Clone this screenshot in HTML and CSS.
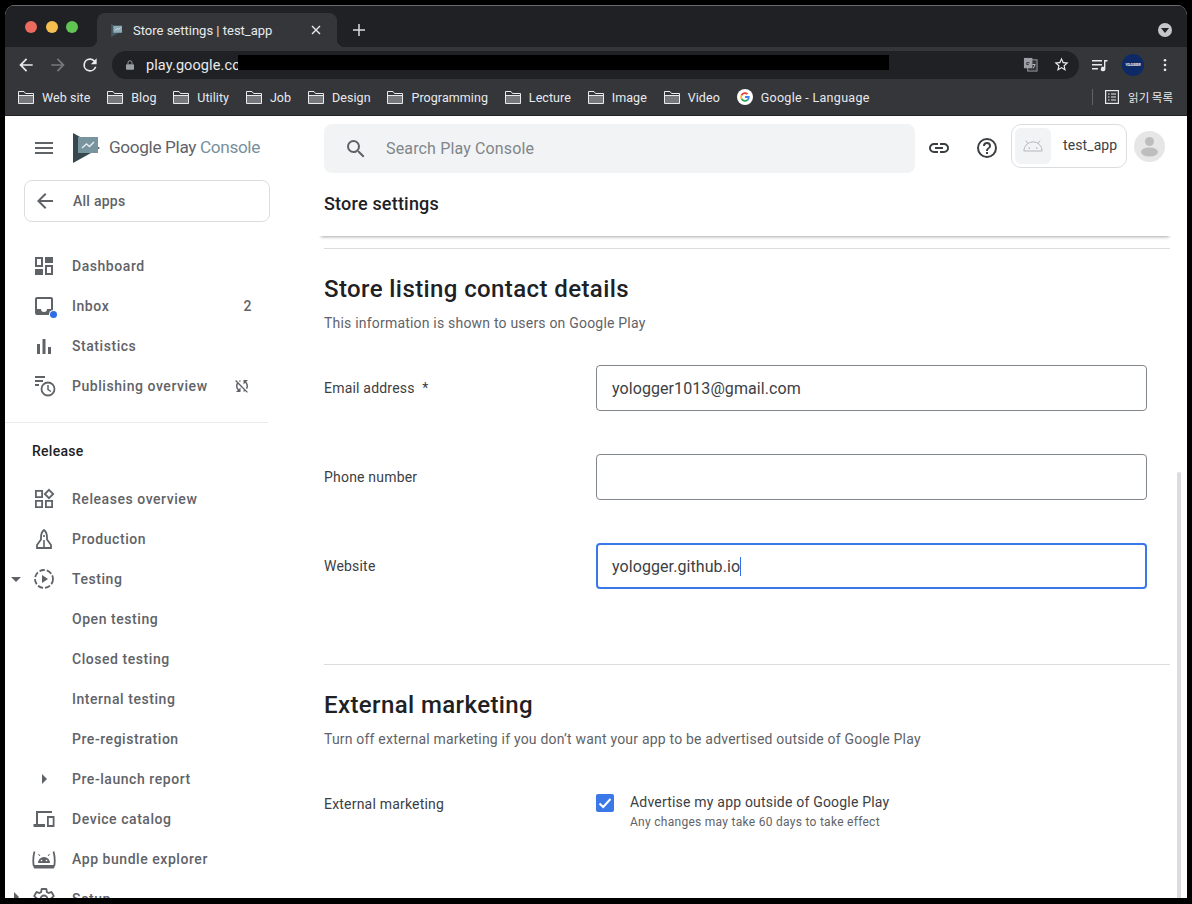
FILE: index.html
```html
<!DOCTYPE html>
<html lang="en">

<head>
    <meta charset="UTF-8">
    <title>Store settings | test_app</title>
    <link rel="stylesheet" href="styles.css">
</head>

<body>
    <svg class="defs" width="0" height="0">
        <symbol id="folder" viewBox="0 0 16 13">
            <path d="M.5 4.500h15v8H.5z" fill="#77787b"/>
            <path d="M.5.500h5.500l1.500 2H15.500v10H.5zM.5 4.500h15" fill="none" stroke="#e8eaed"/>
        </symbol>
    </svg>

    <div class="window">

        <!-- tab strip -->
        <div class="titlebar">
            <div class="lights">
                <span class="light red"></span>
                <span class="light yellow"></span>
                <span class="light green"></span>
            </div>
            <div class="tab">
                <svg class="favicon" viewBox="0 0 27 30"><path d="M0 0l27 15L0 30z" fill="#455a64"/><path d="M5 4h20v16H5z" fill="#8eabb8"/><path d="M9 15l5-5 3 3 5-5" fill="none" stroke="#dfe7ea" stroke-width="2"/></svg>
                <span class="tab-title">Store settings | test_app</span>
                <svg class="tab-close" viewBox="0 0 10 10"><path d="M1 1l8 8M9 1l-8 8" stroke="#e8eaed" stroke-width="1.4"/></svg>
            </div>
            <svg class="tab-plus" viewBox="0 0 12 12"><path d="M6 0v12M0 6h12" stroke="#dadce0" stroke-width="1.5"/></svg>
            <div class="tab-search"><span class="tab-search-arrow"></span></div>
        </div>

        <!-- address bar -->
        <div class="toolbar">
            <svg class="tb-icon" viewBox="0 0 24 24"><path d="M20 11H7.830l5.590-5.590L12 4l-8 8 8 8 1.410-1.410L7.830 13H20v-2z" fill="#e8eaed"/></svg>
            <svg class="tb-icon" viewBox="0 0 24 24"><path d="M4 11h12.170l-5.590-5.590L12 4l8 8-8 8-1.410-1.410L16.170 13H4v-2z" fill="#77787b"/></svg>
            <svg class="tb-icon" viewBox="0 0 24 24"><path d="M17.650 6.350A7.960 7.960 0 0 0 12 4a8 8 0 1 0 7.730 10h-2.080A6 6 0 1 1 12 6c1.660 0 3.140.690 4.220 1.780L13 11h7V4l-2.350 2.350z" fill="#e8eaed"/></svg>
            <div class="omnibox">
                <svg class="lock" viewBox="0 0 10 12"><path d="M1 5h8a1 1 0 0 1 1 1v5a1 1 0 0 1-1 1H1a1 1 0 0 1-1-1V6a1 1 0 0 1 1-1z" fill="#9aa0a6"/><path d="M2.500 5V3.200a2.500 2.500 0 0 1 5 0V5" fill="none" stroke="#9aa0a6" stroke-width="1.200"/></svg>
                <span class="url">play.google.com</span>
                <svg class="omni-translate" viewBox="0 0 16 16"><rect x="5" y="3" width="10" height="12" fill="#35363a" stroke="#9aa0a6"/><rect x="1" y="1" width="9" height="11" fill="#9aa0a6"/><path d="M7 6H4v2h2" fill="none" stroke="#35363a"/><path d="M10 8h3M11 12l2-4" stroke="#bdc1c6" fill="none"/></svg>
                <svg class="omni-star" viewBox="0 0 24 24"><path d="M22 9.240l-7.190-.620L12 2 9.190 8.630 2 9.240l5.460 4.730L5.820 21 12 17.270 18.180 21l-1.630-7.030L22 9.240zM12 15.400l-3.760 2.270 1-4.280-3.320-2.880 4.380-.380L12 6.100l1.710 4.040 4.380.380-3.320 2.880 1 4.280L12 15.400z" fill="#e8eaed"/></svg>
            </div>
            <svg class="tb-media" viewBox="0 0 16 14"><path d="M0 2h10v1.400H0zM0 6h10v1.400H0zM0 10h6v1.400H0z" fill="#e8eaed"/><path d="M12 2h3.500v1.600H13.400V11a2.300 2.300 0 1 1-1.400-2.100z" fill="#e8eaed"/></svg>
            <div class="tb-avatar"><span>YOLOGGER</span></div>
            <svg class="tb-dots" viewBox="0 0 4 16"><circle cx="2" cy="2.500" r="1.500" fill="#e8eaed"/><circle cx="2" cy="8" r="1.500" fill="#e8eaed"/><circle cx="2" cy="13.500" r="1.500" fill="#e8eaed"/></svg>
        </div>

        <!-- bookmarks -->
        <div class="bookmarks">
            <a class="bm"><svg class="folder"><use href="#folder"/></svg>Web site</a>
            <a class="bm"><svg class="folder"><use href="#folder"/></svg>Blog</a>
            <a class="bm"><svg class="folder"><use href="#folder"/></svg>Utility</a>
            <a class="bm"><svg class="folder"><use href="#folder"/></svg>Job</a>
            <a class="bm"><svg class="folder"><use href="#folder"/></svg>Design</a>
            <a class="bm"><svg class="folder"><use href="#folder"/></svg>Programming</a>
            <a class="bm"><svg class="folder"><use href="#folder"/></svg>Lecture</a>
            <a class="bm"><svg class="folder"><use href="#folder"/></svg>Image</a>
            <a class="bm"><svg class="folder"><use href="#folder"/></svg>Video</a>
            <a class="bm bm-google">
                <svg class="g-logo" viewBox="0 0 16 16">
                    <circle cx="8" cy="8" r="8" fill="#fff"/>
                    <path d="M8 8h3.800a3.900 3.900 0 0 1-1.300 3" fill="none" stroke="#4285f4" stroke-width="1.800"/>
                    <path d="M10.500 11a3.900 3.900 0 0 1-6-1.300" fill="none" stroke="#34a853" stroke-width="1.800"/>
                    <path d="M4.500 9.700a3.900 3.900 0 0 1 0-3.400" fill="none" stroke="#fbbc05" stroke-width="1.800"/>
                    <path d="M4.500 6.300a3.900 3.900 0 0 1 6-1.300" fill="none" stroke="#ea4335" stroke-width="1.800"/>
                </svg>Google - Language</a>
            <div class="reading">
                <svg class="reading-icon" viewBox="0 0 14 14"><rect x=".6" y=".6" width="12.800" height="12.800" fill="none" stroke="#e8eaed" stroke-width="1.200"/><path d="M3 4h1.500M3 7h1.500M3 10h1.500M6 4h5M6 7h5M6 10h5" stroke="#e8eaed"/></svg>
                <span class="reading-text">읽기 목록</span>
            </div>
        </div>

        <div class="page">
            <!-- left nav -->
            <div class="sidebar">
                <div class="brand">
                    <svg class="hamburger" viewBox="0 0 18 12"><path d="M0 0h18v2H0zM0 5h18v2H0zM0 10h18v2H0z" fill="#5f6368"/></svg>
                    <svg class="play-logo" viewBox="0 0 27 30"><path d="M0 0l27 15L0 30z" fill="#37474f"/><path d="M5 4h20v16H5z" fill="#78949f"/><path d="M9 15l4.500-4 3 2.500 4.500-4.500" fill="none" stroke="#e3eaed" stroke-width="1.500"/></svg>
                    <span class="brand-name">Google Play <span class="brand-light">Console</span></span>
                </div>
                <div class="all-apps">
                    <svg class="i24" viewBox="0 0 24 24"><path d="M20 11H7.830l5.590-5.590L12 4l-8 8 8 8 1.410-1.410L7.830 13H20v-2z" fill="#5f6368"/></svg>
                    <span>All apps</span>
                </div>

                <div class="nav">
                    <div class="item">
                        <svg class="i24" viewBox="0 0 24 24"><path d="M3 3h8v10H3zm2 2v6h4V5zM13 3h8v6h-8zM3 15h8v6H3zM13 11h8v10h-8zm2 2v6h4v-6z" fill="#5f6368" fill-rule="evenodd"/></svg>
                        <span>Dashboard</span>
                    </div>
                    <div class="item">
                        <span class="dot-wrap">
                            <svg class="i24" viewBox="0 0 24 24"><path d="M5 3h14a2 2 0 0 1 2 2v14a2 2 0 0 1-2 2H5a2 2 0 0 1-2-2V5a2 2 0 0 1 2-2zm0 2v10h4a3 3 0 0 0 6 0h4V5z" fill="#5f6368" fill-rule="evenodd"/></svg>
                            <span class="blue-dot"></span>
                        </span>
                        <span>Inbox</span>
                        <span class="count">2</span>
                    </div>
                    <div class="item">
                        <svg class="i24" viewBox="0 0 24 24"><path d="M5 10h3v10H5zM10.500 5h3v15h-3zM16 13h3v7h-3z" fill="#5f6368"/></svg>
                        <span>Statistics</span>
                    </div>
                    <div class="item">
                        <svg class="i24" viewBox="0 0 24 24"><path d="M3 2h10v2H3zM3 6h8v2H3zM3 10h4v2H3z" fill="#5f6368"/><circle cx="16" cy="15" r="6.500" fill="none" stroke="#5f6368" stroke-width="1.800"/><path d="M16 11v4.500l3 2" fill="none" stroke="#5f6368" stroke-width="1.500"/></svg>
                        <span>Publishing overview</span>
                        <svg class="sync-off" viewBox="0 0 24 24"><path d="M10 6.350V4.260c-.8.210-1.550.540-2.230.960l1.460 1.460c.250-.120.500-.240.770-.330zm-7.140-.940l2.360 2.360C4.450 8.990 4 10.440 4 12c0 2.210.910 4.200 2.360 5.640L4 20h6v-6l-2.240 2.240C6.680 15.150 6 13.660 6 12c0-1 .250-1.940.680-2.770l8.080 8.080c-.250.130-.500.250-.770.340v2.090c.8-.210 1.550-.540 2.230-.960l2.360 2.360 1.270-1.270L4.140 4.140 2.860 5.410zM20 4h-6v6l2.240-2.240C17.320 8.850 18 10.340 18 12c0 1-.250 1.940-.680 2.770l1.460 1.460C19.550 15.010 20 13.560 20 12c0-2.210-.910-4.200-2.360-5.640L20 4z" fill="#5f6368"/></svg>
                    </div>
                </div>

                <div class="side-line"></div>
                <div class="side-title">Release</div>

                <div class="nav">
                    <div class="item">
                        <svg class="i24" viewBox="0 0 24 24"><path d="M3.900 3.900h6.200v6.200H3.900zM3.900 13.900h6.200v6.200H3.900zM13.900 13.900h6.200v6.200h-6.200zM17 2.800L21.200 7 17 11.200 12.800 7z" fill="none" stroke="#5f6368" stroke-width="1.800"/></svg>
                        <span>Releases overview</span>
                    </div>
                    <div class="item">
                        <svg class="i24" viewBox="0 0 24 24"><path d="M12 3c2 1.500 3 4 3 7.500v2l4 5.500v3H5v-3l4-5.500v-2C9 7 10 4.500 12 3z" fill="none" stroke="#5f6368" stroke-width="1.800"/><path d="M12 8v2M12 13v8" stroke="#5f6368" stroke-width="1.600"/></svg>
                        <span>Production</span>
                    </div>
                    <div class="item">
                        <span class="caret-down"></span>
                        <svg class="i24" viewBox="0 0 24 24"><circle cx="12" cy="12" r="9" fill="none" stroke="#5f6368" stroke-width="1.800" stroke-dasharray="5.500 2"/><path d="M10 8l6 4-6 4z" fill="#5f6368"/></svg>
                        <span>Testing</span>
                    </div>
                    <div class="item"><span class="no-icon"></span><span>Open testing</span></div>
                    <div class="item"><span class="no-icon"></span><span>Closed testing</span></div>
                    <div class="item"><span class="no-icon"></span><span>Internal testing</span></div>
                    <div class="item"><span class="no-icon"></span><span>Pre-registration</span></div>
                    <div class="item">
                        <span class="no-icon"><span class="caret-right"></span></span>
                        <span>Pre-launch report</span>
                    </div>
                    <div class="item">
                        <svg class="i24" viewBox="0 0 24 24"><path d="M4 4h16v2H6v11h7v3H1.500v-3H4z" fill="#5f6368"/><path d="M15 9h7.500v11H15zm1.800 2v7h3.900v-7z" fill="#5f6368" fill-rule="evenodd"/></svg>
                        <span>Device catalog</span>
                    </div>
                    <div class="item">
                        <svg class="i24" viewBox="0 0 24 24"><path d="M2.500 4.500c-1.300 4.500-1.400 10.500-.8 14.500M21.500 4.500c1.300 4.500 1.400 10.500.8 14.500" fill="none" stroke="#5f6368" stroke-width="1.800"/><path d="M1.500 18h21v2a1.500 1.500 0 0 1-1.500 1.500H3A1.500 1.500 0 0 1 1.500 20z" fill="#5f6368"/><path d="M6 16a6 6 0 0 1 12 0z" fill="#5f6368"/><path d="M8 9L6.500 7M16 9l1.500-2" stroke="#5f6368"/><circle cx="9.500" cy="13.500" r=".8" fill="#fff"/><circle cx="14.500" cy="13.500" r=".8" fill="#fff"/></svg>
                        <span>App bundle explorer</span>
                    </div>
                    <div class="item">
                        <span class="caret-setup"></span>
                        <svg class="i24" viewBox="0 0 24 24"><path d="M19.430 12.980c.04-.32.070-.64.070-.98s-.03-.66-.07-.98l2.110-1.650c.19-.15.240-.42.120-.64l-2-3.460c-.12-.22-.39-.3-.61-.22l-2.490 1c-.52-.4-1.080-.73-1.690-.98l-.38-2.650A.49.490 0 0 0 14 2h-4c-.25 0-.46.18-.49.420l-.38 2.650c-.61.25-1.170.59-1.690.98l-2.490-1c-.23-.09-.49 0-.61.220l-2 3.460c-.13.220-.07.49.12.640l2.110 1.650c-.04.320-.07.650-.07.980s.03.660.07.980l-2.110 1.650c-.19.150-.24.420-.12.640l2 3.460c.12.220.39.3.61.220l2.490-1c.52.4 1.080.73 1.690.98l.38 2.650c.03.240.24.420.49.420h4c.25 0 .46-.18.49-.42l.38-2.650c.61-.25 1.170-.59 1.690-.98l2.490 1c.23.090.49 0 .61-.22l2-3.460c.12-.22.07-.49-.12-.64zM12 15.500a3.500 3.500 0 1 1 0-7 3.500 3.500 0 0 1 0 7z" fill="none" stroke="#5f6368" stroke-width="1.800"/></svg>
                        <span>Setup</span>
                    </div>
                </div>
            </div>

            <!-- main column -->
            <div class="main">
                <div class="topbar">
                    <div class="search">
                        <svg class="i24" viewBox="0 0 24 24"><path d="M15.500 14h-.79l-.28-.27A6.470 6.470 0 0 0 16 9.500 6.500 6.500 0 1 0 9.500 16c1.610 0 3.090-.59 4.230-1.570l.27.28v.79l5 4.990L20.490 19l-4.990-5zm-6 0a4.500 4.500 0 1 1 0-9 4.500 4.500 0 0 1 0 9z" fill="#5f6368"/></svg>
                        <span>Search Play Console</span>
                    </div>
                    <svg class="top-link" viewBox="0 0 24 24"><path d="M3.900 12c0-1.710 1.390-3.100 3.100-3.100h4V7H7a5 5 0 0 0 0 10h4v-1.900H7c-1.710 0-3.100-1.390-3.100-3.100zM8 13h8v-2H8v2zm9-6h-4v1.900h4c1.710 0 3.100 1.390 3.100 3.100s-1.390 3.100-3.100 3.100h-4V17h4a5 5 0 0 0 0-10z" fill="#3c4043"/></svg>
                    <svg class="top-help" viewBox="0 0 24 24"><path d="M11 18h2v-2h-2v2zm1-16a10 10 0 1 0 0 20 10 10 0 0 0 0-20zm0 18a8 8 0 1 1 0-16 8 8 0 0 1 0 16zm0-14a4 4 0 0 0-4 4h2c0-1.100.9-2 2-2s2 .9 2 2c0 2-3 1.750-3 5h2c0-2.250 3-2.500 3-5a4 4 0 0 0-4-4z" fill="#3c4043"/></svg>
                    <div class="app-chip">
                        <div class="app-icon">
                            <svg class="android" viewBox="0 0 24 14"><path d="M1 13a11 11 0 0 1 22 0z" fill="none" stroke="#b5b8bb" stroke-width="1.200"/><path d="M6 4L3.500 .5M18 4l2.500-3.500" stroke="#b5b8bb" stroke-width="1.200"/><circle cx="7.500" cy="9.500" r="1" fill="#b5b8bb"/><circle cx="16.500" cy="9.500" r="1" fill="#b5b8bb"/></svg>
                        </div>
                        <span class="app-name">test_app</span>
                    </div>
                    <div class="account">
                        <svg viewBox="0 0 31 31"><circle cx="15.500" cy="10.500" r="4.500" fill="#bdbdbd"/><ellipse cx="15.500" cy="21" rx="8.500" ry="4.500" fill="#bdbdbd"/></svg>
                    </div>
                </div>

                <div class="page-head">Store settings</div>
                <div class="rule first"></div>

                <h2 class="section-title">Store listing contact details</h2>
                <p class="section-desc">This information is shown to users on Google Play</p>

                <div class="form">
                    <div class="row">
                        <label class="row-label">Email address <span class="star">*</span></label>
                        <div class="field">yologger1013@gmail.com</div>
                    </div>
                    <div class="row">
                        <label class="row-label">Phone number</label>
                        <div class="field"></div>
                    </div>
                    <div class="row">
                        <label class="row-label">Website</label>
                        <div class="field focused">yologger.github.io<span class="cursor"></span></div>
                    </div>
                </div>

                <div class="rule second"></div>

                <h2 class="section-title">External marketing</h2>
                <p class="section-desc">Turn off external marketing if you don’t want your app to be advertised outside of Google Play</p>

                <div class="check-row">
                    <label class="row-label check-label">External marketing</label>
                    <div class="checkbox">
                        <svg viewBox="0 0 18 18"><path d="M3.500 9.500l3.700 3.500 7.300-8" fill="none" stroke="#fff" stroke-width="2"/></svg>
                    </div>
                    <div class="check-text">
                        <div class="check-main">Advertise my app outside of Google Play</div>
                        <div class="check-sub">Any changes may take 60 days to take effect</div>
                    </div>
                </div>
            </div>

            <div class="scrollbar"></div>
        </div>

        <div class="redacted"></div>
    </div>
</body>

</html>
```

FILE: styles.css
```css
* {
    margin: 0;
    padding: 0;
    box-sizing: border-box;
}

html,
body {
    height: 904px;
    overflow: hidden;
    background: #000;
}

body {
    font-family: Roboto, "Noto Sans CJK KR", sans-serif;
    padding: 5px;
}

.defs {
    display: block;
    height: 0;
}

.window {
    position: relative;
    width: 1182px;
    height: 893px;
    border-radius: 10px 10px 0 0;
    overflow: hidden;
    display: flex;
    flex-direction: column;
    background: #fff;
}

/* tab strip */
.titlebar {
    height: 42px;
    flex: none;
    display: flex;
    align-items: flex-end;
    background: #202124;
    border-top: 1px solid #6b6c6e;
}

.lights {
    width: 92px;
    height: 41px;
    display: flex;
    gap: 8.500px;
    padding: 15px 0 0 20px;
}

.light {
    width: 12px;
    height: 12px;
    border-radius: 50%;
}

.red {
    background: #ed6a5e;
}

.yellow {
    background: #f4bf4f;
}

.green {
    background: #61c554;
}

.tab {
    position: relative;
    width: 240px;
    height: 34px;
    background: #35363a;
    border-radius: 8px 8px 0 0;
    display: flex;
    align-items: center;
    padding: 0 16px 0 14px;
}

.tab::before,
.tab::after {
    content: "";
    position: absolute;
    bottom: 0;
    width: 8px;
    height: 8px;
}

.tab::before {
    left: -8px;
    background: radial-gradient(circle at 0 0, #202124 8px, #35363a 8.5px);
}

.tab::after {
    right: -8px;
    background: radial-gradient(circle at 100% 0, #202124 8px, #35363a 8.5px);
}

.favicon {
    width: 12px;
    height: 13px;
    flex: none;
}

.tab-title {
    margin-left: 10px;
    font-size: 13px;
    color: #e8eaed;
    flex: 1;
}

.tab-close {
    width: 10px;
    height: 10px;
}

.tab-plus {
    width: 12px;
    height: 12px;
    margin: 0 0 11px 16px;
}

.tab-search {
    width: 14px;
    height: 14px;
    margin: 0 15px 10px auto;
    border-radius: 50%;
    background: #c4c7ca;
    display: flex;
    align-items: center;
    justify-content: center;
}

.tab-search-arrow {
    border-left: 4px solid transparent;
    border-right: 4px solid transparent;
    border-top: 5px solid #202124;
    margin-top: 1px;
}

/* address bar */
.toolbar {
    height: 35px;
    flex: none;
    display: flex;
    align-items: center;
    background: #35363a;
    padding-left: 11px;
}

.tb-icon {
    width: 20px;
    height: 20px;
    margin-right: 12px;
}

.omnibox {
    width: 967px;
    height: 28px;
    border-radius: 14px;
    background: #202124;
    display: flex;
    align-items: center;
    padding-left: 14px;
}

.lock {
    width: 8px;
    height: 10px;
}

.url {
    margin: 1px 0 0 12px;
    font-size: 14.500px;
    letter-spacing: .1px;
    color: #e8eaed;
}

.omni-translate {
    width: 15px;
    height: 15px;
    margin-left: auto;
}

.omni-star {
    width: 17px;
    height: 17px;
    margin: 0 9px 0 15px;
}

.tb-media {
    width: 16px;
    height: 14px;
    margin-left: 13px;
}

.tb-avatar {
    width: 22px;
    height: 22px;
    margin-left: 14px;
    border-radius: 50%;
    background: #0d2a66;
    display: flex;
    align-items: center;
    justify-content: center;
    overflow: hidden;
}

.tb-avatar span {
    font-size: 3px;
    font-weight: 700;
    color: #fff;
}

.tb-dots {
    width: 4px;
    height: 14px;
    margin-left: 19px;
}

/* bookmarks */
.bookmarks {
    height: 34px;
    flex: none;
    display: flex;
    align-items: center;
    gap: 16.800px;
    padding: 0 0 3px 13px;
    background: #35363a;
    border-bottom: 1px solid #202124;
}

.bm {
    display: flex;
    align-items: center;
    gap: 8px;
    font-size: 12.500px;
    letter-spacing: .07px;
    color: #e8eaed;
    white-space: nowrap;
}

.bm-google {
    letter-spacing: .3px;
}

.folder {
    width: 16px;
    height: 13px;
    flex: none;
}

.g-logo {
    width: 16px;
    height: 16px;
}

.reading {
    margin-left: auto;
    display: flex;
    align-items: center;
    height: 16px;
    padding: 0 14px 0 12px;
    border-left: 1px solid #5f6368;
}

.reading-icon {
    width: 14px;
    height: 14px;
}

.reading-text {
    margin-left: 9px;
    font-size: 11.500px;
    color: #e8eaed;
    font-family: "Noto Sans CJK KR", sans-serif;
}

/* page */
.page {
    position: relative;
    flex: 1;
    display: flex;
    min-height: 0;
    overflow: hidden;
}

.i24 {
    width: 24px;
    height: 24px;
    flex: none;
}

.sidebar {
    width: 265px;
    flex: none;
    font-size: 14px;
    letter-spacing: .55px;
    color: #5f6368;
    font-weight: 500;
}

.brand {
    height: 64px;
    display: flex;
    align-items: center;
    padding-left: 30px;
}

.hamburger {
    width: 18px;
    height: 12px;
    flex: none;
}

.play-logo {
    width: 27px;
    height: 30px;
    margin-left: 20px;
}

.brand-name {
    margin: -2px 0 0 9px;
    font-size: 17.200px;
    font-weight: 400;
    letter-spacing: -.35px;
    color: #5f6368;
    white-space: nowrap;
}

.brand-light {
    color: #78909c;
}

.all-apps {
    height: 42px;
    width: 246px;
    margin-left: 19px;
    border: 1px solid #dadce0;
    border-radius: 8px;
    display: flex;
    align-items: center;
    gap: 16px;
    padding-left: 8px;
    letter-spacing: .25px;
}

.nav {
    display: flex;
    flex-direction: column;
}

.all-apps + .nav {
    margin-top: 24px;
}

.item {
    position: relative;
    height: 40px;
    width: 247px;
    flex: none;
    display: flex;
    align-items: center;
    gap: 16px;
    padding-left: 27px;
    white-space: nowrap;
}

.no-icon {
    width: 24px;
    flex: none;
    display: flex;
    justify-content: center;
}

.dot-wrap {
    position: relative;
    width: 24px;
    height: 24px;
    flex: none;
}

.blue-dot {
    position: absolute;
    right: -1px;
    bottom: 0;
    width: 7px;
    height: 7px;
    border-radius: 50%;
    background: #2f6fe4;
    box-shadow: 0 0 0 1px #fff;
}

.count {
    margin-left: auto;
}

.sync-off {
    width: 18px;
    height: 18px;
    margin-left: auto;
    margin-right: 1px;
}

.side-line {
    height: 1px;
    width: 263px;
    margin-top: 16px;
    background: #e8eaed;
}

.side-title {
    height: 56px;
    line-height: 56px;
    padding-left: 27px;
    color: #202124;
    letter-spacing: .25px;
}

.caret-down {
    position: absolute;
    left: 6px;
    top: 18px;
    border-left: 5px solid transparent;
    border-right: 5px solid transparent;
    border-top: 5px solid #5f6368;
}

.caret-right {
    border-top: 5px solid transparent;
    border-bottom: 5px solid transparent;
    border-left: 5px solid #5f6368;
}

.caret-setup {
    position: absolute;
    left: 9px;
    top: 13px;
    border-top: 5px solid transparent;
    border-bottom: 5px solid transparent;
    border-left: 5px solid #5f6368;
}

/* main column */
.main {
    width: 846px;
    flex: none;
    margin-left: 54px;
    font-size: 14px;
    letter-spacing: .2px;
    color: #3c4043;
}

.topbar {
    height: 57px;
    padding-top: 8px;
    display: flex;
    align-items: flex-start;
}

.search {
    width: 591px;
    height: 49px;
    background: #f1f3f4;
    border-radius: 8px;
    display: flex;
    align-items: center;
    gap: 18px;
    padding-left: 20px;
    font-size: 16px;
    letter-spacing: .15px;
    color: #80868b;
}

.top-link {
    width: 24px;
    height: 24px;
    margin: 12px 0 0 12px;
}

.top-help {
    width: 24px;
    height: 24px;
    margin: 12px 0 0 24px;
}

.app-chip {
    width: 116px;
    height: 44px;
    margin-left: 12px;
    border: 1px solid #dadce0;
    border-radius: 10px;
    display: flex;
    align-items: center;
    gap: 12px;
    padding-left: 3px;
    font-size: 14px;
    letter-spacing: .1px;
}

.app-name {
    margin-bottom: 2px;
}

.app-icon {
    width: 36px;
    height: 36px;
    border-radius: 6px;
    background: #f1f3f4;
    display: flex;
    align-items: center;
    justify-content: center;
}

.android {
    width: 20px;
    height: 14px;
}

.account {
    width: 31px;
    height: 31px;
    margin: 7px 0 0 7px;
    border-radius: 50%;
    background: #e6e6e6;
}

.page-head {
    height: 63px;
    line-height: 62px;
    margin: 0 -2px 0 -6px;
    padding-left: 6px;
    font-size: 18px;
    font-weight: 500;
    letter-spacing: .2px;
    color: #202124;
    box-shadow: 0 4px 3px -3px rgba(60, 64, 67, .45);
}

.rule {
    height: 1px;
    background: #dadce0;
}

.rule.first {
    margin-top: 12px;
}

.rule.second {
    margin-top: 75px;
}

.section-title {
    margin-top: 24px;
    font-size: 24px;
    line-height: 32px;
    font-weight: 500;
    letter-spacing: .4px;
    color: #202124;
}

.section-desc {
    margin-top: 8px;
    line-height: 20px;
    color: #5f6368;
}

.form {
    margin-top: 32px;
    display: flex;
    flex-direction: column;
    gap: 43px;
}

.row {
    display: flex;
    align-items: center;
}

.row-label {
    width: 272px;
    flex: none;
}

.star {
    margin-left: 4px;
}

.field {
    width: 551px;
    height: 46px;
    border: 1px solid #80868b;
    border-radius: 4px;
    padding-left: 15px;
    font-size: 16px;
    line-height: 46px;
    letter-spacing: .08px;
    color: #3c4043;
}

.field.focused {
    border: 2px solid #3b78e7;
    padding-left: 14px;
    line-height: 44px;
}

.cursor {
    display: inline-block;
    width: 1px;
    height: 19px;
    vertical-align: -4px;
    background: #2f6fe4;
}

.check-row {
    margin-top: 43px;
    display: flex;
    align-items: flex-start;
}

.check-label {
    padding-top: 4px;
}

.checkbox {
    width: 18px;
    height: 18px;
    margin-top: 2px;
    border-radius: 2px;
    background: #3b78e7;
    flex: none;
}

.checkbox svg {
    display: block;
}

.check-text {
    margin-left: 16px;
}

.check-main {
    line-height: 20px;
}

.check-sub {
    font-size: 12px;
    line-height: 20px;
    letter-spacing: .28px;
    color: #5f6368;
}

.scrollbar {
    position: absolute;
    right: 6px;
    top: 356px;
    bottom: 0;
    width: 4px;
    background: #dadce0;
    border-radius: 2px 2px 0 0;
}

/* black box over the url */
.redacted {
    position: absolute;
    left: 233px;
    top: 50px;
    width: 651px;
    height: 15px;
    background: #000;
}
```
